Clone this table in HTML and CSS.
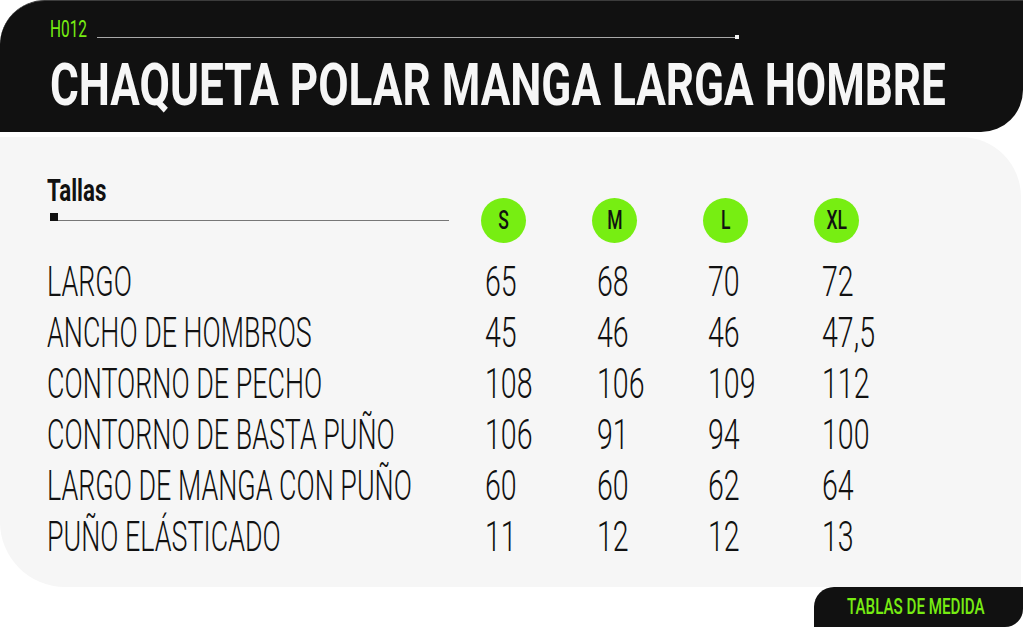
FILE: index.html
```html
<!DOCTYPE html>
<html lang="es">
<head>
<meta charset="utf-8">
<title>Chaqueta Polar Manga Larga Hombre</title>
<link rel="stylesheet" href="styles.css">
</head>
<body>
<div class="page">
  <header class="head">
    <div class="code-row">
      <span class="code"><span class="cx">H012</span></span>
      <span class="code-line"></span>
      <span class="code-dot"></span>
    </div>
    <h1 class="title"><span class="cx">CHAQUETA POLAR MANGA LARGA HOMBRE</span></h1>
  </header>

  <section class="panel">
    <div class="sizes-head">
      <div class="sizes-label">
        <h2 class="tallas"><span class="cx">Tallas</span></h2>
        <div class="rule"><span class="rule-dot"></span><span class="rule-line"></span></div>
      </div>
      <div class="badges">
        <span class="badge"><span class="cx">S</span></span>
        <span class="badge"><span class="cx">M</span></span>
        <span class="badge"><span class="cx">L</span></span>
        <span class="badge"><span class="cx">XL</span></span>
      </div>
    </div>

    <div class="table">
      <div class="lbl"><span class="cx">LARGO</span></div><div class="num"><span class="cx">65</span></div><div class="num"><span class="cx">68</span></div><div class="num"><span class="cx">70</span></div><div class="num"><span class="cx">72</span></div>
      <div class="lbl"><span class="cx">ANCHO DE HOMBROS</span></div><div class="num"><span class="cx">45</span></div><div class="num"><span class="cx">46</span></div><div class="num"><span class="cx">46</span></div><div class="num"><span class="cx">47,5</span></div>
      <div class="lbl"><span class="cx">CONTORNO DE PECHO</span></div><div class="num"><span class="cx">108</span></div><div class="num"><span class="cx">106</span></div><div class="num"><span class="cx">109</span></div><div class="num"><span class="cx">112</span></div>
      <div class="lbl"><span class="cx">CONTORNO DE BASTA PUÑO</span></div><div class="num"><span class="cx">106</span></div><div class="num"><span class="cx">91</span></div><div class="num"><span class="cx">94</span></div><div class="num"><span class="cx">100</span></div>
      <div class="lbl"><span class="cx">LARGO DE MANGA CON PUÑO</span></div><div class="num"><span class="cx">60</span></div><div class="num"><span class="cx">60</span></div><div class="num"><span class="cx">62</span></div><div class="num"><span class="cx">64</span></div>
      <div class="lbl"><span class="cx">PUÑO ELÁSTICADO</span></div><div class="num"><span class="cx">11</span></div><div class="num"><span class="cx">12</span></div><div class="num"><span class="cx">12</span></div><div class="num"><span class="cx">13</span></div>
    </div>
  </section>

  <footer class="foot">
    <div class="tag"><span class="cx">TABLAS DE MEDIDA</span></div>
  </footer>
</div>
</body>
</html>
```

FILE: styles.css
```css
* { box-sizing: border-box; margin: 0; padding: 0; }

html, body {
  width: 1024px;
  height: 627px;
  overflow: hidden;
  background: #ffffff;
}

body {
  font-family: Roboto, "Liberation Sans", sans-serif;
  color: #111111;
}

/* condensed text: glyphs compressed horizontally */
.cx {
  display: inline-block;
  white-space: nowrap;
  transform-origin: 0 50%;
}

.page {
  width: 1024px;
  height: 627px;
  display: flex;
  flex-direction: column;
}

/* ---------- header ---------- */
.head {
  width: 1023px;
  height: 132px;
  background: #111111;
  border-top: 1px solid #3c3c3c;
  border-radius: 45px 0 42px 0;
  padding: 18px 0 0 50px;
  flex: none;
  overflow: hidden;
}

.code-row {
  display: flex;
  align-items: flex-end;
  height: 22px;
}

.code {
  width: 38px;
  font-size: 23px;
  line-height: 22px;
  color: #77ec12;
  font-weight: 400;
}
.code .cx { transform: scaleX(0.67); }

.code-line {
  width: 638px;
  height: 1px;
  background: #a8a8a8;
  margin: 0 0 3px 9px;
}

.code-dot {
  width: 4px;
  height: 4px;
  background: #f2f2f2;
  margin-bottom: 2px;
}

.title {
  margin-top: 14px;
  font-size: 59px;
  line-height: 59px;
  font-weight: 700;
  color: #f6f6f6;
  white-space: nowrap;
}
.title .cx { transform: scaleX(0.747); }

/* ---------- panel ---------- */
.panel {
  width: 1021px;
  height: 450px;
  margin-top: 5px;
  background: #f6f6f6;
  border-radius: 0 60px 0 65px;
  padding: 39px 0 0 47px;
  flex: none;
}

.sizes-head {
  display: flex;
  align-items: flex-start;
}

.sizes-label {
  width: 402px;
}

.tallas {
  font-size: 31px;
  line-height: 30px;
  font-weight: 700;
  color: #111111;
}
.tallas .cx { transform: scaleX(0.72); }

.rule {
  display: flex;
  align-items: flex-end;
  margin-top: 7px;
  padding-left: 3px;
}

.rule-dot {
  width: 8px;
  height: 8px;
  background: #111111;
}

.rule-line {
  flex: 1;
  height: 1px;
  background: #777777;
}

.badges {
  display: flex;
  gap: 66px;
  margin: 22px 0 0 32px;
}

.badge {
  width: 45px;
  height: 45px;
  border-radius: 50%;
  background: #77ee12;
  display: flex;
  align-items: center;
  justify-content: center;
  font-size: 25px;
  line-height: 25px;
  font-weight: 500;
  color: #111111;
}
.badge .cx { transform: scaleX(0.7); transform-origin: 50% 50%; }

.table {
  margin-top: 13px;
  display: grid;
  grid-template-columns: 438px 112px 111px 114px auto;
  grid-auto-rows: 51px;
  font-size: 42px;
  line-height: 51px;
  font-weight: 300;
  color: #111111;
}

.lbl .cx { transform: scaleX(0.64); }
.num .cx { transform: scaleX(0.68); }

/* ---------- footer tag ---------- */
.foot {
  display: flex;
  justify-content: flex-end;
  padding-right: 1px;
}

.tag {
  width: 209px;
  height: 40px;
  background: #111111;
  border-radius: 20px 0 18px 0;
  color: #77ec12;
  font-size: 22px;
  line-height: 40px;
  font-weight: 500;
  text-align: center;
  overflow: hidden;
  padding-right: 5px;
}
.tag .cx { transform: scaleX(0.69); transform-origin: 50% 50%; }
```
